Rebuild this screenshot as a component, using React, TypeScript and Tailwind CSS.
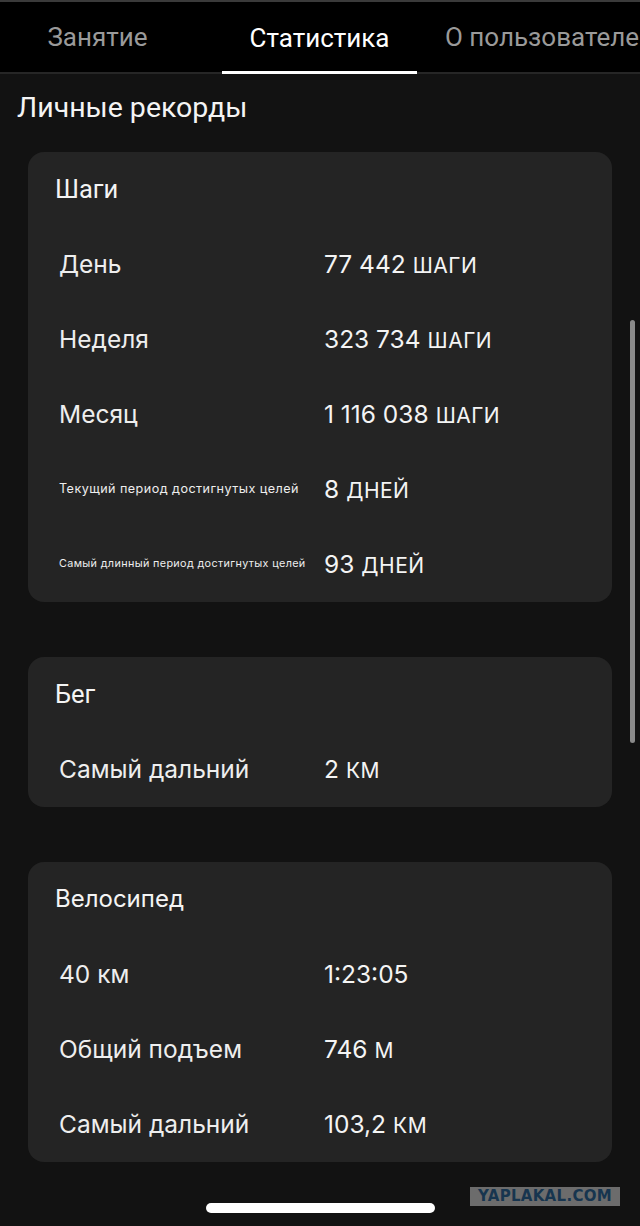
const records = [
  {
    title: "Шаги",
    rows: [
      { label: "День", value: "77 442", unit: "ШАГИ" },
      { label: "Неделя", value: "323 734", unit: "ШАГИ" },
      { label: "Месяц", value: "1 116 038", unit: "ШАГИ" },
      { label: "Текущий период достигнутых целей", value: "8", unit: "ДНЕЙ", small: "text-[12.6px] tracking-[0.45px]" },
      { label: "Самый длинный период достигнутых целей", value: "93", unit: "ДНЕЙ", small: "text-[10.8px] tracking-[0.35px]" },
    ],
  },
  {
    title: "Бег",
    rows: [{ label: "Самый дальний", value: "2", unit: "КМ" }],
  },
  {
    title: "Велосипед",
    inter: true,
    rows: [
      { label: "40 км", value: "1:23:05", unit: "" },
      { label: "Общий подъем", value: "746", unit: "М" },
      { label: "Самый дальний", value: "103,2", unit: "КМ" },
    ],
  },
];

export default function App() {
  return (
    <div className="relative w-[640px] h-[1226px] overflow-hidden bg-[#121212] text-[#f4f4f4] font-['Roboto',sans-serif]">
      {/* tabs */}
      <div className="h-[74px] bg-black border-t-2 border-t-[#3a3a3a] border-b-2 border-b-[#262626] flex text-[26px] whitespace-nowrap">
        <div className="w-[195px] flex items-center justify-center text-[#9a9a9a] pt-[1px]">Занятие</div>
        <div className="w-[195px] ml-[27px] flex items-center justify-center text-white border-b-[3px] border-b-white -mb-[2px] pt-[4px]">
          Статистика
        </div>
        <div className="flex items-center pl-[28px] text-[#9a9a9a] pt-[1px]">О пользователе</div>
      </div>

      <div className="px-[28px]">
        <h1 className="h-[78px] flex items-center -ml-[11px] pb-[9px] text-[28.5px] text-[#f4f4f4]">Личные рекорды</h1>

        <div className="flex flex-col gap-[55px]">
          {records.map((card) => (
            <div key={card.title} className="bg-[#242424] rounded-[16px]">
              <div
                className={
                  "h-[75px] flex items-center pl-[27px] pb-[1px] " +
                  (card.inter ? "font-['Inter',sans-serif] text-[24px]" : "text-[25.5px]")
                }
              >
                {card.title}
              </div>
              {card.rows.map((row) => (
                <div key={row.label} className="h-[75px] flex items-center font-['Inter',sans-serif]">
                  <div
                    className={
                      "w-[296px] pl-[31px] text-[#eeeeee] " + (row.small ? row.small : "text-[24.5px]")
                    }
                  >
                    {row.label}
                  </div>
                  <div className="text-[24.5px] text-[#f4f4f4]">
                    {row.value}
                    {row.unit && <span className="ml-[7px] text-[21px] tracking-[0.5px]">{row.unit}</span>}
                  </div>
                </div>
              ))}
            </div>
          ))}
        </div>
      </div>

      {/* scrollbar */}
      <div className="absolute left-[630px] top-[320px] w-[5px] h-[423px] rounded-full bg-[#8a8a8a]" />

      {/* home indicator */}
      <div className="absolute left-[206px] top-[1203px] w-[229px] h-[10px] rounded-full bg-white" />

      {/* watermark */}
      <div className="absolute left-[470px] top-[1187px] w-[150px] h-[19px] bg-[#6c6c6c] flex items-center justify-center">
        <span className="font-['DejaVu_Sans',sans-serif] font-bold text-[15px] tracking-[0.3px] text-[#17354f] leading-none">
          YAPLAKAL.COM
        </span>
      </div>
    </div>
  );
}
